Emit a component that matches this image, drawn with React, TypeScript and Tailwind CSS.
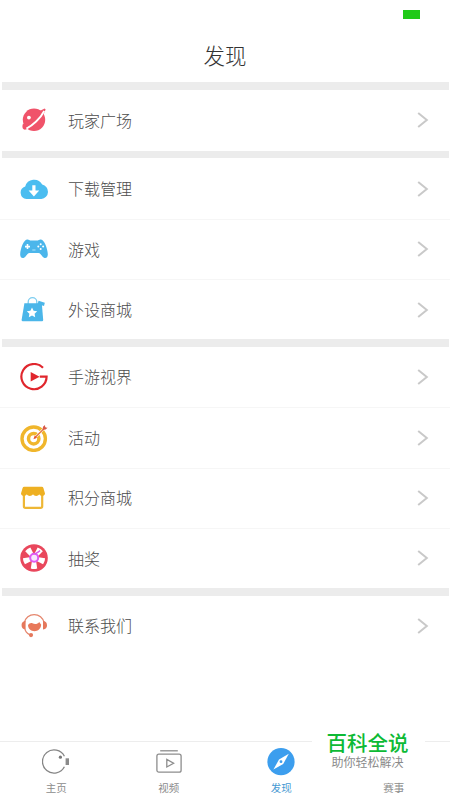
import type { ReactNode } from 'react'

interface MenuItem {
  label: string
  icon: ReactNode
}

const PlanetIcon = () => (
  <svg viewBox="0 0 28 28" className="size-7">
    <circle cx="14" cy="13.8" r="11.2" fill="#f0536a" />
    <path d="M3 17.6C1.8 21 2.4 24.2 5.8 23.6L10 22Z" fill="#f0536a" />
    <path d="M19.6 5L24.6 2.4L25.6 3.6L23.2 9.6Z" fill="#f0536a" />
    <path d="M6.4 22.6C12.4 19.6 20.4 12.6 24.2 5" fill="none" stroke="#fff" strokeWidth="1.8" />
    <circle cx="8.9" cy="11.6" r="1.9" fill="#fff" />
  </svg>
)

const CloudIcon = () => (
  <svg viewBox="0 0 28 28" className="size-7">
    <path
      d="M6.5 24A6.4 6.4 0 0 1 5.2 11.5A9.2 9.2 0 0 1 22.2 9.6A7.3 7.3 0 0 1 21.4 24Z"
      fill="#4bbdf0"
    />
    <path d="M12.3 10.2H15.5V15.6H19.2L13.9 21.4L8.6 15.6H12.3Z" fill="#fff" />
  </svg>
)

const GamepadIcon = () => (
  <svg viewBox="0 0 28 28" className="size-7">
    <path
      d="M7 4.6C8.6 4.2 9.4 5.6 11 5.6H17C18.6 5.6 19.4 4.2 21 4.6C24.4 5.2 27.4 13.5 27.8 19C28 22.6 25.6 23.7 23.6 22.4C21.4 21 20.7 18 18.4 18H9.6C7.3 18 6.6 21 4.4 22.4C2.4 23.7 0 22.6 .2 19C.6 13.5 3.6 5.2 7 4.6Z"
      fill="#4bb6eb"
    />
    <path d="M7.5 9.1V14.1M5 11.6H10" stroke="#fff" strokeWidth="1.6" />
    <g fill="#fff">
      <circle cx="20.7" cy="9.2" r="1" />
      <circle cx="20.7" cy="14" r="1" />
      <circle cx="18.3" cy="11.6" r="1" />
      <circle cx="23.1" cy="11.6" r="1" />
    </g>
    <path d="M12.3 15H15.5" stroke="#b5e4fa" strokeWidth="1" />
  </svg>
)

const BagIcon = () => (
  <svg viewBox="0 0 28 28" className="size-7">
    <path d="M8.2 8V6A4.3 4.3 0 0 1 16.8 6V8" fill="none" stroke="#7ccdf0" strokeWidth="1.3" />
    <path d="M4.4 7.2H21.8L23.2 24Q23.2 25.3 22 25.3H2.9Q1.5 25.3 1.6 24Z" fill="#4bb6e9" />
    <path d="M18.6 4.8L24.8 6.8L24 10L17.6 8Z" fill="#4bb6e9" />
    <path
      d="M12 11.4L13.6 14.7L17.2 15.2L14.6 17.7L15.2 21.3L12 19.6L8.8 21.3L9.4 17.7L6.8 15.2L10.4 14.7Z"
      fill="#fff"
    />
  </svg>
)

const PlayGIcon = () => (
  <svg viewBox="0 0 28 28" className="size-7">
    <path d="M23 4.8A12.6 12.6 0 1 0 26.6 13.6H19.8" fill="none" stroke="#e0262d" strokeWidth="2.2" />
    <path d="M10.7 9V18.6L19.6 13.7Z" fill="#e0262d" />
  </svg>
)

const TargetIcon = () => (
  <svg viewBox="0 0 28 28" className="size-7">
    <circle cx="13.7" cy="14.7" r="11.7" fill="none" stroke="#f0b62c" strokeWidth="3.4" />
    <circle cx="13.7" cy="14.7" r="5.2" fill="none" stroke="#f0b62c" strokeWidth="3.5" />
    <path d="M16 12.6L23 5.5" stroke="#fff" strokeWidth="2.4" />
    <path d="M14.6 14L25.4 3.2" stroke="#e5733e" strokeWidth="1.3" />
    <path d="M13.4 15.2L14.8 11.6L17 13.8Z" fill="#e4542f" />
    <path d="M22.6 5.8L23 2.8L25 .9L25.2 3.4L27.6 3.7L25.6 5.6Z" fill="#d8594b" />
  </svg>
)

const ShopIcon = () => (
  <svg viewBox="0 0 28 28" className="size-7">
    <path d="M3.9 11V22.2Q3.9 23.8 5.5 23.8H20.6Q22.2 23.8 22.2 22.2V11" fill="none" stroke="#eeb735" strokeWidth="2.2" />
    <path
      d="M4.2 2.7H21.8Q23 2.7 23.4 4L25 9.6C24.9 12.4 20.5 12.6 19.2 10.3C18 12.6 14.4 12.6 13 10.3C11.6 12.6 8 12.6 6.8 10.3C5.5 12.6 1.1 12.4 1 9.6L2.6 4Q3 2.7 4.2 2.7Z"
      fill="#eeb022"
    />
  </svg>
)

const WheelIcon = () => (
  <svg viewBox="0 0 28 28" className="size-7">
    <circle cx="14" cy="14" r="13.8" fill="#e9475c" />
    {[36, 108, 180, 252, 324].map((angle) => (
      <path
        key={angle}
        d="M10.8 3.4Q14 2.4 17.2 3.4L16.2 10H11.8Z"
        fill="#fff"
        transform={`rotate(${angle} 14 14)`}
      />
    ))}
    <circle cx="14.2" cy="13.8" r="4" fill="#f7e7ff" stroke="#e05af2" strokeWidth="2" />
    <path d="M14.8 10.2L18.4 8L20 6.6" stroke="#d958e8" strokeWidth="1.5" fill="none" />
  </svg>
)

const HeadsetIcon = () => (
  <svg viewBox="0 0 28 28" className="size-7">
    <path d="M4.4 10.6A10 10 0 0 1 24 10.6" fill="none" stroke="#e5866d" strokeWidth="1.3" />
    <path d="M5.6 8.8V17.6C2.4 17.2 1.6 15.2 1.6 13.3S2.4 9.3 5.6 8.8ZM23 8.8V17.6C26.2 17.2 27 15.2 27 13.3S26.2 9.3 23 8.8Z" fill="#e5785c" />
    <path d="M8 13C9.2 11.4 10.8 10.4 12.4 11.2C14.6 12.6 17.6 12.2 19.2 10L21.2 12.8C20.8 17 18 19.2 14.5 19.2S8.2 17 8 13Z" fill="#e8795b" />
    <path d="M4.9 16.8C5.4 20 7.4 21.4 9.6 22.6" fill="none" stroke="#e5866d" strokeWidth="1.2" />
    <circle cx="11" cy="23.1" r="2.1" fill="#e5785c" />
  </svg>
)

const menuGroups: MenuItem[][] = [
  [{ label: '玩家广场', icon: <PlanetIcon /> }],
  [
    { label: '下载管理', icon: <CloudIcon /> },
    { label: '游戏', icon: <GamepadIcon /> },
    { label: '外设商城', icon: <BagIcon /> },
  ],
  [
    { label: '手游视界', icon: <PlayGIcon /> },
    { label: '活动', icon: <TargetIcon /> },
    { label: '积分商城', icon: <ShopIcon /> },
    { label: '抽奖', icon: <WheelIcon /> },
  ],
  [{ label: '联系我们', icon: <HeadsetIcon /> }],
]

const tabs = [
  {
    label: '主页',
    active: false,
    icon: (
      <svg viewBox="0 0 28 28" className="size-7" fill="none">
        <path d="M22.4 8.2A11.6 11.6 0 1 0 22.4 18.8" stroke="#858585" strokeWidth="1.3" />
        <circle cx="18.4" cy="9.2" r="1.6" fill="#777" />
        <path d="M23.6 10.3H27V17H23.6Z" fill="#8b8b8b" />
      </svg>
    ),
  },
  {
    label: '视频',
    active: false,
    icon: (
      <svg viewBox="0 0 28 28" className="size-7" fill="none" stroke="#8d8d8d" strokeWidth="1.3">
        <path d="M5.2 2.8H22.8" />
        <rect x="1.9" y="6.2" width="24.2" height="18" rx="2" />
        <path d="M11.8 11.4V19L18.6 15.2Z" />
      </svg>
    ),
  },
  {
    label: '发现',
    active: true,
    icon: (
      <svg viewBox="0 0 28 28" className="size-7">
        <circle cx="14" cy="13.7" r="13.6" fill="#3c9eee" />
        <path d="M21.8 5.8L16.2 15.9L6.4 21.6L12 11.5Z" fill="#fff" />
        <circle cx="14" cy="13.7" r="1.4" fill="#3c9eee" />
      </svg>
    ),
  },
  { label: '赛事', active: false, icon: <div className="size-7" /> },
]

function MenuRow({ item, divided }: { item: MenuItem; divided: boolean }) {
  return (
    <li
      className={`flex h-[60.25px] items-center pr-[21px] pl-5 ${
        divided ? 'border-t border-[#f6f6f6]' : ''
      }`}
    >
      {item.icon}
      <span className="ml-5 flex-1 pb-[1.4px] text-base leading-6">{item.label}</span>
      <svg viewBox="0 0 12 16" className="h-4 w-3" fill="none" stroke="#c9c9c9" strokeWidth="2">
        <path d="M1.2 1L9.8 8L1.2 15" />
      </svg>
    </li>
  )
}

export default function App() {
  return (
    <div className="relative flex h-[800px] w-[450px] flex-col overflow-hidden bg-white font-['Noto_Sans_CJK_SC',sans-serif] font-light text-[#4c4c4c]">
      <header className="flex h-[82.4px] shrink-0 flex-col">
        <div className="flex h-7 items-center justify-end pr-[30px]">
          <div className="h-[9px] w-[17px] bg-[#20ca18]" />
        </div>
        <h1 className="text-center text-[21.5px] leading-[53px] text-[#333]">发现</h1>
      </header>

      <main className="flex-1">
        {menuGroups.map((group) => (
          <section key={group[0].label}>
            <div className="mr-px ml-[2px] h-[7.9px] bg-[#ececec]" />
            <ul>
              {group.map((item, index) => (
                <MenuRow key={item.label} item={item} divided={index > 0} />
              ))}
            </ul>
          </section>
        ))}
      </main>

      <nav className="grid h-[59px] shrink-0 grid-cols-4 border-t border-[#ededed]">
        {tabs.map((tab) => (
          <div key={tab.label} className="flex flex-col items-center pt-[6px]">
            {tab.icon}
            <span
              className={`mt-1 text-[10.5px] leading-4 font-normal ${
                tab.active ? 'text-[#4699d2]' : 'text-[#8c8c8c]'
              }`}
            >
              {tab.label}
            </span>
          </div>
        ))}
      </nav>

      {/* Brand card over the last tab */}
      <div className="absolute top-[720px] left-[312px] h-[55px] w-[113px] bg-white pt-[10px] text-center">
        <p className="-ml-[2px] text-[20.5px] leading-6 font-medium text-[#0dba35]">百科全说</p>
        <p className="-ml-[2px] pt-px text-xs leading-[14px] font-normal text-[#8a8a8a]">助你轻松解决</p>
      </div>
    </div>
  )
}
